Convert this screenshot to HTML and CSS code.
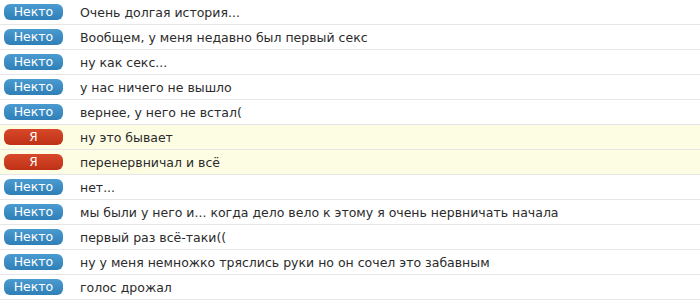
FILE: index.html
```html
<!DOCTYPE html>
<html lang="ru">
<head>
<meta charset="utf-8">
<link rel="stylesheet" href="styles.css">
</head>
<body>
<div class="log">
  <div class="row"><span class="badge them">Некто</span><span class="msg">Очень долгая история...</span></div>
  <div class="row"><span class="badge them">Некто</span><span class="msg">Вообщем, у меня недавно был первый секс</span></div>
  <div class="row"><span class="badge them">Некто</span><span class="msg">ну как секс...</span></div>
  <div class="row"><span class="badge them">Некто</span><span class="msg">у нас ничего не вышло</span></div>
  <div class="row"><span class="badge them">Некто</span><span class="msg">вернее, у него не встал(</span></div>
  <div class="row me"><span class="badge self">Я</span><span class="msg">ну это бывает</span></div>
  <div class="row me"><span class="badge self">Я</span><span class="msg">перенервничал и всё</span></div>
  <div class="row"><span class="badge them">Некто</span><span class="msg">нет...</span></div>
  <div class="row"><span class="badge them">Некто</span><span class="msg">мы были у него и... когда дело вело к этому я очень нервничать начала</span></div>
  <div class="row"><span class="badge them">Некто</span><span class="msg">первый раз всё-таки((</span></div>
  <div class="row"><span class="badge them">Некто</span><span class="msg">ну у меня немножко тряслись руки но он сочел это забавным</span></div>
  <div class="row"><span class="badge them">Некто</span><span class="msg">голос дрожал</span></div>
</div>
</body>
</html>
```
FILE: styles.css
```css
html, body {
  margin: 0;
  padding: 0;
  background: #ffffff;
}
body {
  font-family: "DejaVu Sans", Verdana, sans-serif;
  font-size: 12.5px;
  color: #2b2b2b;
  overflow: hidden;
}
.log {
  display: flex;
  flex-direction: column;
}
.row {
  box-sizing: border-box;
  height: 25px;
  display: flex;
  align-items: center;
  padding-left: 4px;
  border-bottom: 1px solid #e6e6e6;
}
.row.me {
  background: #fdfde4;
}
.badge {
  box-sizing: border-box;
  width: 59px;
  height: 16px;
  border-radius: 6px;
  display: flex;
  align-items: center;
  justify-content: center;
  color: #ffffff;
  font-size: 12.5px;
  line-height: 1;
  flex: none;
}
.badge.them {
  background: linear-gradient(#4a9bd0, #2f7fb8);
}
.badge.self {
  background: linear-gradient(#d8492a, #bf3116);
  font-size: 12px;
}
.msg {
  margin-left: 17px;
  white-space: nowrap;
}
```
